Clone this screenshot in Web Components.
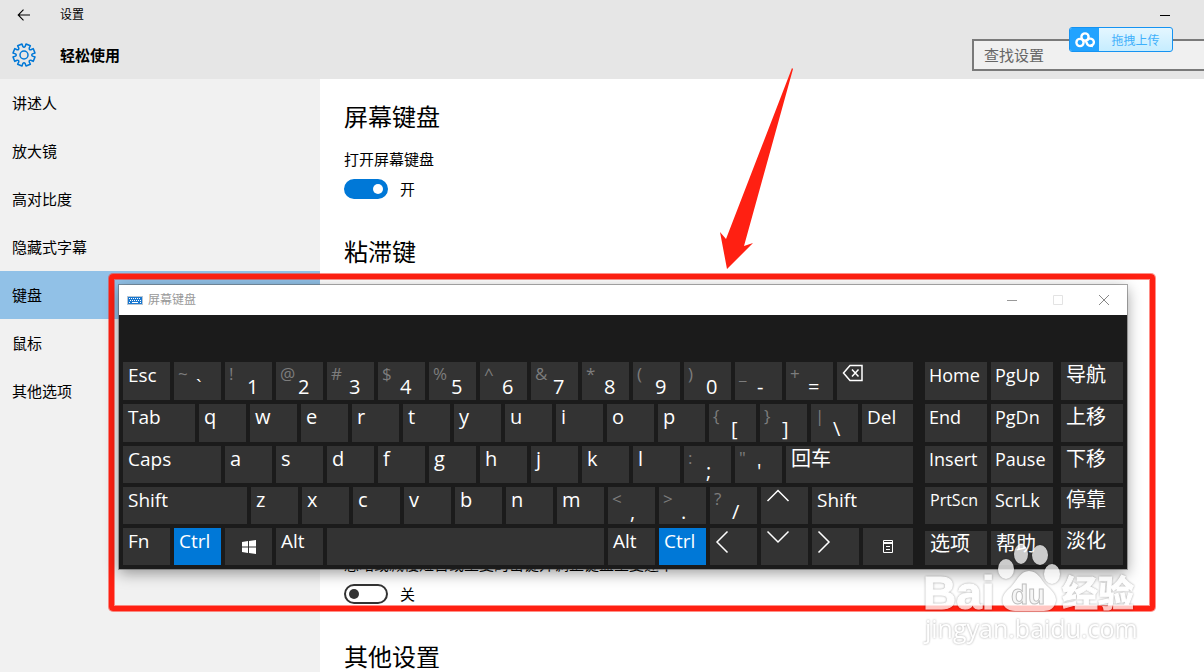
<!DOCTYPE html>
<html lang="zh-CN">
<head>
<meta charset="UTF-8">
<meta name="viewport" content="width=device-width, initial-scale=1">
<title>设置</title>
<style>
  html, body {
    margin: 0;
    height: 100%;
    overflow: hidden;
  }

  body {
    font-family: "Open Sans", "Noto Sans CJK SC", sans-serif;
    font-size: 15px;
    line-height: 20px;
    color: #000;
  }
</style>
</head>
<body>
<settings-app></settings-app>

<script>
// ---------- header ----------
class SettingsHeader extends HTMLElement {
  constructor() {
    super();
    this.attachShadow({ mode: 'open' });
  }

  connectedCallback() {
    this.shadowRoot.innerHTML = `
      <style>
        :host { display: block; position: relative; background: #e6e6e6; }
        .bar { display: flex; align-items: center; height: 30px; padding: 0 34px 0 12px; }
        .bar span { flex: 1; font-size: 12px; margin-left: 24px; }
        button { border: 0; padding: 0; background: none; display: flex; align-items: center; justify-content: center; }
        .back { width: 24px; height: 24px; }
        .min { width: 10px; height: 20px; }
        .min::before { content: ""; width: 10px; height: 1px; background: #000; }
        .title { display: flex; align-items: center; height: 49px; padding-left: 12px; }
        h1 { flex: 1; margin: 0 0 0 24px; font-size: 15px; font-weight: 700; }
        input {
          box-sizing: border-box;
          width: 232px;
          height: 32px;
          padding: 0 10px;
          border: 2px solid #7a7a7a;
          border-right: 0;
          border-radius: 0;
          background: #f0f0f0;
          font: inherit;
          outline: 0;
        }
        input::placeholder { color: #666; opacity: 1; }
        .upload {
          position: absolute;
          top: 27px;
          right: 31px;
          width: 104px;
          height: 25px;
          box-sizing: border-box;
          border: 1px solid #1593f2;
          border-radius: 3px;
          overflow: hidden;
          background: linear-gradient(#e4f6ff, #c6edff);
          font: 12px "Noto Sans CJK SC", sans-serif;
          color: #3fb0fb;
        }
        .upload i { display: flex; align-items: center; justify-content: center; width: 29px; height: 23px; background: #22a3ff; }
        .upload span { flex: 1; text-align: center; }
      </style>
      <div class="bar">
        <button class="back" type="button" aria-label="返回">
          <svg width="14" height="12" viewBox="0 0 14 12" fill="none" stroke="#000" stroke-width="1.1"><path d="M1.500 6H13M6.500.7 1.200 6l5.300 5.300"/></svg>
        </button>
        <span>设置</span>
        <button class="min" type="button" aria-label="最小化"></button>
      </div>
      <div class="title">
        <svg width="24" height="24" viewBox="0 0 24 24" fill="none" stroke="#0078d7" stroke-width="1.500" stroke-linejoin="round">
          <path id="gear"/>
          <circle cx="12" cy="12" r="4"/>
        </svg>
        <h1>轻松使用</h1>
        <input type="search" placeholder="查找设置" aria-label="查找设置">
      </div>
      <button class="upload" type="button">
        <i><svg width="20" height="16" viewBox="0 0 20 16" fill="none" stroke="#fff" stroke-width="2.400">
          <circle cx="10" cy="5" r="3.600"/><circle cx="5" cy="10.500" r="3.600"/><path d="M10.500 8.300 12.500 12.500A3.600 3.600 0 1 0 12.200 8.300M18 14 15.500 13.500"/>
        </svg></i>
        <span>拖拽上传</span>
      </button>
    `;
    this.shadowRoot.getElementById('gear').setAttribute('d', this.gearPath(8));
  }

  // outline of a gear centred on 12,12
  gearPath(teeth) {
    const step = Math.PI * 2 / teeth;
    const points = [];
    for (let i = 0; i < teeth; i++) {
      const mid = (i + 0.5) * step;
      [[-0.33, 8.6], [-0.27, 11.2], [0.27, 11.2], [0.33, 8.6]].forEach(([offset, r]) => {
        const angle = mid + offset * step;
        points.push([12 + r * Math.cos(angle), 12 + r * Math.sin(angle)]);
      });
    }
    let d = `M${points[0]}`;
    for (let i = 0; i < teeth; i++) {
      const next = points[(i * 4 + 4) % points.length];
      const valley = (i + 1) * step;
      const control = [12 + 7 * Math.cos(valley), 12 + 7 * Math.sin(valley)];
      d += `L${points[i * 4 + 1]}L${points[i * 4 + 2]}L${points[i * 4 + 3]}Q${control} ${next}`;
    }
    return d + 'Z';
  }
}

customElements.define('settings-header', SettingsHeader);

// ---------- sidebar ----------
class SettingsNav extends HTMLElement {
  constructor() {
    super();
    this.attachShadow({ mode: 'open' });
  }

  connectedCallback() {
    const items = ['讲述人', '放大镜', '高对比度', '隐藏式字幕', '键盘', '鼠标', '其他选项'];
    this.shadowRoot.innerHTML = `
      <style>
        :host { display: block; flex: 0 0 320px; background: #f1f1f1; }
        nav { display: flex; flex-direction: column; }
        a { padding: 14px 12px; color: #000; text-decoration: none; }
        a[aria-current] { background: #91c1e7; }
      </style>
      <nav>
        ${items.map(name => `<a href="#"${name === '键盘' ? ' aria-current="page"' : ''}>${name}</a>`).join('')}
      </nav>
    `;
  }
}

customElements.define('settings-nav', SettingsNav);

// ---------- heading + description + switch ----------
class SettingSection extends HTMLElement {
  constructor() {
    super();
    this.attachShadow({ mode: 'open' });
  }

  connectedCallback() {
    const label = this.getAttribute('label');
    const on = this.hasAttribute('on');

    this.shadowRoot.innerHTML = `
      <style>
        :host { display: block; margin-bottom: 37px; }
        h2 { margin: 0; font-size: 24px; line-height: 32px; font-weight: 400; }
        label { display: block; margin-bottom: 10px; }
        h2 + label { margin-top: 16px; }
        .row { display: flex; align-items: center; gap: 12px; }
        input {
          appearance: none;
          box-sizing: border-box;
          display: flex;
          align-items: center;
          width: 44px;
          height: 20px;
          margin: 0;
          padding: 0 3px;
          border: 2px solid #333;
          border-radius: 10px;
          background: #fff;
        }
        input::before { content: ""; width: 10px; height: 10px; border-radius: 50%; background: #333; }
        input:checked { justify-content: flex-end; border-color: #0078d7; background: #0078d7; }
        input:checked::before { background: #fff; }
      </style>
      ${this.textContent.trim() ? '<h2><slot></slot></h2>' : ''}
      ${label ? `
        <label for="switch">${label}</label>
        <div class="row">
          <input id="switch" type="checkbox" role="switch" ${on ? 'checked' : ''}>
          <span>${on ? '开' : '关'}</span>
        </div>` : ''}
    `;
  }
}

customElements.define('setting-section', SettingSection);

// ---------- on-screen keyboard ----------
const ICONS = {
  backspace: '<svg width="22" height="18" viewBox="0 0 22 18"><path d="M1.500 9 8 1.500H20V16.500H8ZM10 5.500l6.500 7M16.500 5.500l-6.500 7" stroke-width="1.500"/></svg>',
  up: '<svg width="24" height="14" viewBox="0 0 24 14"><path d="M1.500 12 12 1.500 22.500 12"/></svg>',
  down: '<svg width="24" height="14" viewBox="0 0 24 14"><path d="M1.500 1.500 12 12 22.500 1.500"/></svg>',
  left: '<svg width="14" height="24" viewBox="0 0 14 24"><path d="M12.500 1.500 2 12l10.500 10.500"/></svg>',
  right: '<svg width="14" height="24" viewBox="0 0 14 24"><path d="M1.500 1.500 12 12 1.500 22.500"/></svg>',
  win: '<svg width="14" height="14" viewBox="0 0 14 14"><path d="M0 2 6 1V6.500H0ZM7 1 14 0V6.500H7ZM0 7.500H6V13L0 12ZM7 7.500H14V14L7 13Z" fill="#fff" stroke="none"/></svg>',
  menu: '<svg width="10" height="13" viewBox="0 0 10 13"><path d="M.5.5h9v12h-9ZM.5 2.500h9M.5 3.500h9M3 6.500h4M3 9.500h4" stroke-width="1"/></svg>'
};

class OskKey extends HTMLElement {
  constructor() {
    super();
    this.attachShadow({ mode: 'open' });
  }

  connectedCallback() {
    const shift = this.getAttribute('shift');
    const icon = this.getAttribute('icon');
    const width = this.getAttribute('width') || '47';

    this.shadowRoot.innerHTML = `
      <style>
        :host { display: flex; flex: ${width} ${width} 0; min-width: 0; }
        :host([low]) { margin-top: 3px; }
        button {
          flex: 1;
          min-width: 0;
          display: flex;
          align-items: flex-start;
          border: 0;
          padding: 0 0 0 5px;
          background: #333;
          color: #fff;
          font: 20px/26px "Open Sans", "Noto Sans CJK SC", sans-serif;
          text-align: left;
          white-space: nowrap;
        }
        :host([active]) button { background: #0078d7; }
        :host([size="word"]) button { font-size: 19px; }
        :host([size="nav"]) button { font-size: 18px; }
        :host([size="small"]) button { font-size: 16px; }
        :host([shift]) button, :host([size="nav"]) button { padding-left: 4px; }
        .shift { width: 18px; font-size: 17px; line-height: 24px; color: #7d7d7d; }
        .shift + .main { padding-top: 12px; }
        svg { margin-top: 2px; fill: none; stroke: #fff; stroke-width: 1.500; }
        .center { align-items: center; justify-content: center; }
        button.center { padding: 0; }
        .center svg { margin: 0; }
      </style>
      <button type="button" class="${icon === 'win' || icon === 'menu' ? 'center' : ''}" ${icon ? `aria-label="${icon}"` : ''}>
        ${shift ? '<span class="shift"></span>' : ''}
        ${icon ? ICONS[icon] : '<span class="main"><slot></slot></span>'}
      </button>
    `;
    if (shift) this.shadowRoot.querySelector('.shift').textContent = shift;
  }
}

customElements.define('osk-key', OskKey);

class OskKeyboard extends HTMLElement {
  constructor() {
    super();
    this.attachShadow({ mode: 'open' });
  }

  connectedCallback() {
    const pair = (shift, text) => ({ shift, text });
    const word = (text, width, extra = {}) => ({ text, width, size: 'word', ...extra });
    const nav = (text, extra = {}) => ({ text, size: 'nav', ...extra });
    const zh = (text, extra = {}) => ({ text, ...extra });
    const letters = str => [...str].map(text => ({ text }));

    this.blocks = [
      { width: 790, rows: [
        [word('Esc'), pair('~', '`'), pair('!', '1'), pair('@', '2'), pair('#', '3'), pair('$', '4'), pair('%', '5'),
          pair('^', '6'), pair('&', '7'), pair('*', '8'), pair('(', '9'), pair(')', '0'), pair('_', '-'), pair('+', '='),
          { icon: 'backspace', width: 76 }],
        [word('Tab', 72), ...letters('qwertyuiop'), pair('{', '['), pair('}', ']'), pair('|', '\\'), word('Del', 51)],
        [word('Caps', 98), ...letters('asdfghjkl'), pair(':', ';'), pair('"', "'"), zh('回车', { width: 127 })],
        [word('Shift', 124), ...letters('zxcvbnm'), pair('<', ','), pair('>', '.'), pair('?', '/'), { icon: 'up' }, word('Shift', 101)],
        [word('Fn'), word('Ctrl', 47, { active: '' }), { icon: 'win' }, word('Alt'), { text: '', width: 277 },
          word('Alt'), word('Ctrl', 47, { active: '' }), { icon: 'left' }, { icon: 'down' }, { icon: 'right' },
          { icon: 'menu', width: 50 }]
      ] },
      { width: 128, rows: [
        [nav('Home'), nav('PgUp')],
        [nav('End'), nav('PgDn')],
        [nav('Insert'), nav('Pause')],
        [{ text: 'PrtScn', size: 'small' }, nav('ScrLk')],
        [zh('选项', { low: '' }), zh('帮助', { low: '' })]
      ] },
      { width: 62, rows: [[zh('导航')], [zh('上移')], [zh('下移')], [zh('停靠')], [zh('淡化')]] }
    ];

    this.shadowRoot.innerHTML = `
      <style>
        :host { display: block; background: #1b1b1b; box-shadow: 0 0 0 1px rgba(90, 90, 90, 0.5), 0 4px 14px rgba(0, 0, 0, 0.4); }
        header { display: flex; align-items: center; height: 30px; padding: 0 17px 0 8px; background: #fff; }
        header span { flex: 1; margin-left: 5px; font-size: 12px; color: #999; }
        .controls { display: flex; gap: 34px; }
        .controls button { display: flex; padding: 0; border: 0; background: none; }
        .keys { display: flex; padding: 47px 4px 4px; }
        .block { display: grid; grid-template-rows: 38px 38px 37px 37px 37px; gap: 4px; min-width: 0; }
        .block:nth-child(2) { margin: 0 8px 0 12px; }
        .row { display: flex; gap: 4px; min-width: 0; }
      </style>
      <header>
        <svg width="16" height="9" viewBox="0 0 16 9"><path d="M0 0h16v9H0Z" fill="#b9c6d2"/><path d="M1 1h14v7H1Z" fill="#1a78d0"/><path d="M2 2.500h12M3 4.500h11" stroke="#fff" stroke-dasharray="1 1"/><path d="M2 6.500h1M5 6.500h6M13 6.500h1" stroke="#fff"/></svg>
        <span>屏幕键盘</span>
        <div class="controls">
          <button type="button" aria-label="最小化"><svg width="12" height="12" stroke="#999"><path d="M1 6.500h10"/></svg></button>
          <button type="button" aria-label="最大化" disabled><svg width="12" height="12" fill="none" stroke="#e3e3e3"><path d="M1.500 1.500h9v9h-9Z"/></svg></button>
          <button type="button" aria-label="关闭"><svg width="12" height="12" stroke="#888"><path d="M1 1l10 10M11 1 1 11"/></svg></button>
        </div>
      </header>
      <div class="keys"></div>
    `;

    const keys = this.shadowRoot.querySelector('.keys');
    this.blocks.forEach(({ width, rows }) => {
      const block = document.createElement('div');
      block.className = 'block';
      block.style.flex = `${width} ${width} 0`;
      rows.forEach(row => {
        const line = document.createElement('div');
        line.className = 'row';
        row.forEach(({ text, ...attrs }) => {
          const key = document.createElement('osk-key');
          Object.entries(attrs).forEach(([name, value]) => {
            if (value !== undefined) key.setAttribute(name, value);
          });
          key.textContent = text || '';
          line.append(key);
        });
        block.append(line);
      });
      keys.append(block);
    });
  }
}

customElements.define('osk-keyboard', OskKeyboard);

// ---------- red frame around its content ----------
class MarkFrame extends HTMLElement {
  constructor() {
    super();
    this.attachShadow({ mode: 'open' });
  }

  connectedCallback() {
    this.shadowRoot.innerHTML = `
      <style>
        :host {
          display: block;
          padding: 6px 23px 37px 5px;
          border: 5px solid #ff2012;
          border-radius: 4px;
          box-shadow: 0 0 0 1px rgba(255, 32, 18, 0.5), inset 0 0 0 1px rgba(255, 32, 18, 0.5);
        }
      </style>
      <slot></slot>
    `;
  }
}

customElements.define('mark-frame', MarkFrame);

// ---------- site watermark ----------
class SiteMark extends HTMLElement {
  constructor() {
    super();
    this.attachShadow({ mode: 'open' });
  }

  connectedCallback() {
    this.shadowRoot.innerHTML = `
      <style>
        :host { display: block; pointer-events: none; }
        svg { display: block; filter: drop-shadow(0 0 1px rgba(0, 0, 0, 0.45)); }
        text { font-family: "Open Sans", "Noto Sans CJK SC", sans-serif; fill: #fff; }
        .bold { font-family: "Liberation Sans", "Noto Sans CJK SC", sans-serif; font-weight: 700; stroke: #fff; stroke-width: 1; }
        .du { fill: #f4f4f4; stroke: #aaa; }
      </style>
      <svg width="220" height="106" viewBox="0 0 220 106" opacity="0.75">
        <text class="bold" x="1" y="67" font-size="46">Bai</text>
        <g fill="#fff">
          <ellipse cx="84" cy="27" rx="8" ry="10"/>
          <ellipse cx="99" cy="12" rx="7" ry="10"/>
          <ellipse cx="118" cy="13" rx="8" ry="10"/>
          <ellipse cx="130" cy="32" rx="8" ry="10"/>
          <path d="M107 29c9 0 12 9 18 15 7 6 11 12 8 18-3 8-10 7-18 7H99c-8 0-15 0-18-7-2-7 2-12 8-17 6-6 9-16 18-16Z"/>
        </g>
        <text class="bold du" x="89" y="62" font-size="28">du</text>
        <text class="bold" x="140" y="65" font-size="36">经验</text>
        <text x="3" y="96" font-size="25">jingyan.baidu.com</text>
      </svg>
    `;
  }
}

customElements.define('site-mark', SiteMark);

// ---------- page ----------
class SettingsApp extends HTMLElement {
  constructor() {
    super();
    this.attachShadow({ mode: 'open' });
  }

  connectedCallback() {
    this.shadowRoot.innerHTML = `
      <style>
        :host { display: flex; flex-direction: column; position: relative; height: 100vh; overflow: hidden; background: #fff; }
        .body { display: flex; flex: 1; min-height: 0; }
        main { flex: 1; min-width: 0; padding: 22px 24px 0; }
        /* room for the floating keyboard */
        .below { padding-top: 249px; }
        mark-frame { position: absolute; top: 274px; left: 109px; right: 49px; }
        .arrow { position: absolute; top: 66px; left: 718px; }
        site-mark { position: absolute; right: 62px; bottom: 24px; }
      </style>
      <settings-header></settings-header>
      <div class="body">
        <settings-nav></settings-nav>
        <main>
          <setting-section label="打开屏幕键盘" on>屏幕键盘</setting-section>
          <setting-section>粘滞键</setting-section>
          <setting-section class="below" label="忽略或减慢短暂或重复的击键并调整键盘重复速率"></setting-section>
          <setting-section>其他设置</setting-section>
        </main>
      </div>
      <mark-frame><osk-keyboard></osk-keyboard></mark-frame>
      <svg class="arrow" width="76" height="204" viewBox="0 0 76 204"><path d="M74 2 75 3 26 180 35 177 9 203 2 166 8 173Z" fill="#ff2012"/></svg>
      <site-mark></site-mark>
    `;
  }
}

customElements.define('settings-app', SettingsApp);
</script>
</body>
</html>
